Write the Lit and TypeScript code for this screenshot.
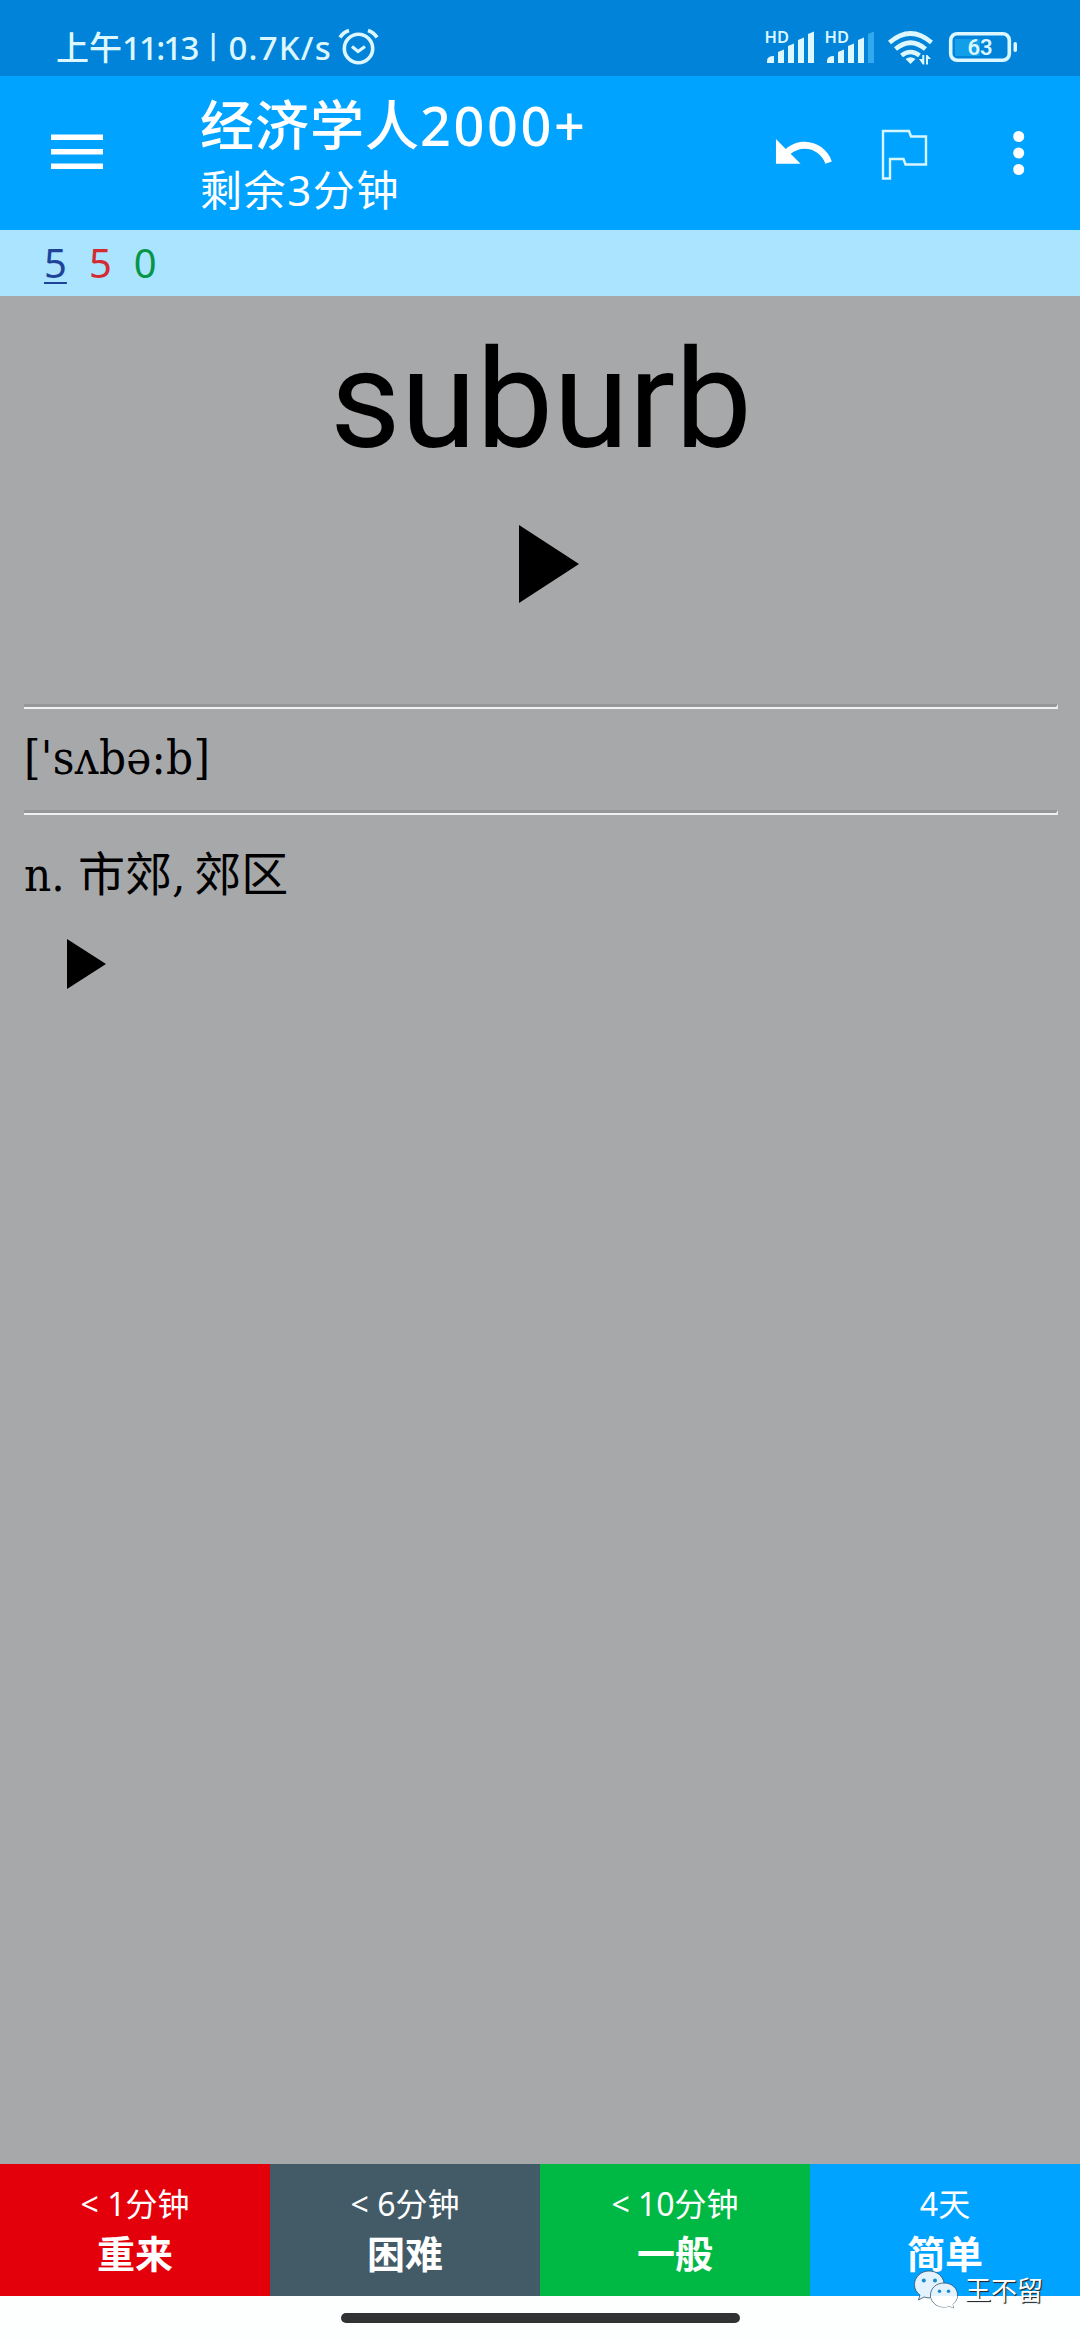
import { LitElement, html, css, svg } from "lit";
import { customElement } from "lit/decorators.js";

interface Answer {
  interval: string;
  label: string;
  tone: string;
}

const ANSWERS: Answer[] = [
  { interval: "< 1分钟", label: "重来", tone: "again" },
  { interval: "< 6分钟", label: "困难", tone: "hard" },
  { interval: "< 10分钟", label: "一般", tone: "good" },
  { interval: "4天", label: "简单", tone: "easy" },
];

@customElement("status-bar")
class StatusBar extends LitElement {
  static styles = css`
    :host {
      display: flex;
      align-items: flex-start;
      height: 76px;
      box-sizing: border-box;
      padding: 0 60px 0 56px;
      background: #0083d9;
      color: #dcf7ff;
    }
    .clock {
      display: flex;
      align-items: baseline;
      font: 500 33px/40px "Noto Sans", "Noto Sans CJK SC", sans-serif;
      padding-top: 28px;
      width: 282px;
      white-space: nowrap;
    }
    .time {
      letter-spacing: -1.8px;
    }
    .divider {
      width: 31px;
      text-align: center;
      font: 500 33px/36px "Roboto", sans-serif;
      align-self: flex-start;
    }
    .speed {
      letter-spacing: 1.2px;
    }
    .alarm {
      display: block;
      margin-top: 28px;
    }
    .spacer {
      flex: 1;
    }
    .signals {
      display: block;
      margin-top: 20px;
      overflow: visible;
    }
    .hd {
      font: 600 16px "Noto Sans", sans-serif;
      fill: #dcf7ff;
    }
    .level {
      font: 600 22px "Roboto", sans-serif;
      fill: #dcf7ff;
    }
  `;

  private bars(x: number, faded: boolean) {
    return svg`
      <path d="M${x} 35v-2q0-5 7-5v7z"/>
      <path d="M${x + 11} 35v-11l6-2.5v13.5z"/>
      <path d="M${x + 21} 35v-17l6-2.5v19.5z"/>
      <path d="M${x + 31} 35v-23l6-2.5v25.5z"/>
      <path d="M${x + 41} 35v-29l6-2.5v31.5z" fill=${faded ? "#31a9ee" : "#dcf7ff"}/>`;
  }

  render() {
    return html`
      <div class="clock">
        <span>上午</span><span class="time">11:13</span><span class="divider">|</span><span class="speed">0.7K/s</span>
      </div>
      <svg class="alarm" width="42" height="38" viewBox="0 0 42 38" fill="none" stroke="#dcf7ff" stroke-width="3.6">
        <circle cx="20.5" cy="20.5" r="14.2" />
        <path d="M2 9.500Q5 4.500 11 2.500M30 2.500Q36 4.500 39 9.500" />
        <path d="M14 18.500L20 23.500L27 18.500" stroke-width="3.200" />
      </svg>
      <div class="spacer"></div>
      <svg class="signals" width="256" height="48" viewBox="0 -8 256 48" fill="#dcf7ff">
        <text class="hd" x="0.5" y="15" textLength="24.5" lengthAdjust="spacingAndGlyphs">HD</text>
        ${this.bars(3, false)}
        <text class="hd" x="60.5" y="15" textLength="24.5" lengthAdjust="spacingAndGlyphs">HD</text>
        ${this.bars(63, true)}
        <g fill="none" stroke="#dcf7ff" stroke-width="4.600">
          <path d="M125.500 14.500Q146.500 -3.500 167.500 14.500" />
          <path d="M131.500 21Q146.500 8.500 161.500 21" />
          <path d="M137.500 27.500Q146.500 20.500 155.500 27.500" />
        </g>
        <path d="M146.500 36L141.500 31Q146.500 27.500 151.500 31Z" />
        <path d="M155 31h3.300v-4h2v9.500h-1.500zM162 27h1.300l3.700 4h-3v5.500h-2z" />
        <rect x="191" y="11" width="25" height="17" fill="#119fe9" />
        <rect x="186.700" y="5.700" width="58.600" height="26.600" rx="6.500" fill="none" stroke="#dcf7ff" stroke-width="3.600" />
        <rect x="249.500" y="14" width="3.500" height="10" rx="1.700" />
        <text class="level" x="203.500" y="27">63</text>
      </svg>
    `;
  }
}

@customElement("deck-toolbar")
class DeckToolbar extends LitElement {
  static styles = css`
    :host {
      display: flex;
      align-items: center;
      height: 154px;
      box-sizing: border-box;
      padding-left: 51px;
      background: #00a3ff;
      color: #fff;
      font-family: "Noto Sans", "Noto Sans CJK SC", sans-serif;
    }
    .menu {
      width: 149px;
      flex: none;
    }
    .menu svg,
    .actions svg {
      display: block;
    }
    .menu svg {
      margin-bottom: 3px;
    }
    .titles {
      flex: 1;
      height: 154px;
      white-space: nowrap;
    }
    .title {
      font-size: 54px;
      font-weight: 500;
      line-height: 64px;
      padding-top: 17px;
      letter-spacing: 1px;
    }
    .latin {
      letter-spacing: 2.6px;
    }
    .subtitle {
      font-size: 42px;
      line-height: 56px;
      padding-top: 5px;
      letter-spacing: 1.6px;
    }
    .actions {
      flex: none;
    }
  `;

  render() {
    return html`
      <div class="menu">
        <svg width="52" height="36" viewBox="0 0 52 36" fill="#fff">
          <rect y="0.500" width="52" height="5.500" />
          <rect y="15" width="52" height="5.500" />
          <rect y="29.500" width="52" height="5.500" />
        </svg>
      </div>
      <div class="titles">
        <div class="title">经济学人<span class="latin">2000+</span></div>
        <div class="subtitle">剩余3分钟</div>
      </div>
      <div class="actions">
        <svg width="310" height="154" viewBox="770 76 310 154">
          <path
            transform="translate(770.500 120) scale(2.730)"
            fill="#fff"
            d="M12.500 8c-2.650 0-5.050.990-6.900 2.600L2 7v9h9l-3.620-3.620c1.390-1.160 3.160-1.880 5.120-1.880 3.540 0 6.550 2.310 7.600 5.500l2.370-.780C21.080 11.030 17.150 8 12.500 8z"
          />
          <path
            d="M883 131H909L911 136.500H926V164.500H905.500L903.500 159H890V178.500H883Z"
            fill="none"
            stroke="#d8f6ff"
            stroke-width="2.400"
          />
          <g fill="#fff">
            <circle cx="1018.700" cy="136.500" r="5.500" />
            <circle cx="1018.700" cy="153" r="5.500" />
            <circle cx="1018.700" cy="169.500" r="5.500" />
          </g>
        </svg>
      </div>
    `;
  }
}

@customElement("card-content")
class CardContent extends LitElement {
  static styles = css`
    :host {
      display: flex;
      flex-direction: column;
      flex: 1;
      padding: 0 22px 0 24px;
      background: #a7a8aa;
      color: #000;
    }
    .word {
      height: 229px;
      box-sizing: border-box;
      padding-top: 24px;
      text-align: center;
      font: 137px/160px "Roboto", sans-serif;
    }
    .play {
      display: block;
      align-self: center;
      margin-left: 15px;
    }
    .rule {
      height: 5px;
      box-sizing: border-box;
      border: solid;
      border-width: 3px 2px 2px 0;
      border-color: #969799 #e8e9ea #f0f1f2 #969799;
    }
    .first {
      margin-top: 101px;
    }
    .phonetic {
      height: 101px;
      font: 47px/97px "DejaVu Serif Condensed", "DejaVu Serif", serif;
      letter-spacing: 0.3px;
      white-space: nowrap;
    }
    .meaning {
      height: 80px;
      margin-top: 20px;
      font: 47px/80px "DejaVu Serif Condensed", "DejaVu Serif", "Noto Sans CJK SC", serif;
      white-space: nowrap;
    }
    .comma {
      letter-spacing: -2.3px;
    }
    .play-small {
      display: block;
      margin: 24px 0 0 43px;
    }
  `;

  render() {
    return html`
      <div class="word">suburb</div>
      <svg class="play" width="60" height="78" viewBox="0 0 60 78"><path d="M0 0L60 39L0 78Z" /></svg>
      <div class="rule first"></div>
      <div class="phonetic">['sʌbə:b]</div>
      <div class="rule"></div>
      <div class="meaning">n. 市郊<span class="comma">, </span>郊区</div>
      <svg class="play-small" width="39" height="50" viewBox="0 0 39 50"><path d="M0 0L39 25L0 50Z" /></svg>
    `;
  }
}

@customElement("app-root")
class AppRoot extends LitElement {
  static styles = css`
    :host {
      display: flex;
      flex-direction: column;
      position: relative;
      width: 1080px;
      height: 2340px;
      overflow: hidden;
      font-family: "Noto Sans", "Noto Sans CJK SC", sans-serif;
      background: #fdfffe;
    }
    .counts {
      display: flex;
      gap: 22px;
      height: 66px;
      box-sizing: border-box;
      padding: 0 44px;
      background: #aae4ff;
      font-size: 40px;
      line-height: 66px;
    }
    .new {
      color: #20439a;
      text-decoration: underline;
      text-decoration-thickness: 2px;
      text-underline-offset: 4px;
    }
    .learning {
      color: #d42b32;
    }
    .review {
      color: #079548;
    }
    .answers {
      display: grid;
      grid-template-columns: repeat(4, 270px);
      height: 132px;
      color: #fff;
      text-align: center;
      white-space: nowrap;
    }
    .interval {
      font-size: 32px;
      line-height: 40px;
      padding-top: 20px;
    }
    .label {
      font-size: 38px;
      font-weight: 700;
      line-height: 50px;
      padding-top: 4px;
    }
    .again {
      background: #e4000b;
    }
    .hard {
      background: #425b67;
    }
    .good {
      background: #00b944;
    }
    .easy {
      background: #00a3ff;
    }
    .nav {
      display: flex;
      justify-content: center;
      height: 44px;
      padding-top: 17px;
      box-sizing: border-box;
    }
    .pill {
      width: 399px;
      height: 10px;
      border-radius: 5px;
      background: #303234;
    }
    .watermark {
      position: absolute;
      left: 913px;
      top: 2269px;
      display: flex;
      align-items: center;
      gap: 6px;
      color: #fff;
      font-size: 26px;
      line-height: 40px;
      text-shadow: 1px 1px 1px #222b33, 1px 1px 0 #444d55;
    }
  `;

  render() {
    return html`
      <status-bar></status-bar>
      <deck-toolbar></deck-toolbar>
      <div class="counts">
        <span class="new">5</span><span class="learning">5</span><span class="review">0</span>
      </div>
      <card-content></card-content>
      <div class="answers">
        ${ANSWERS.map(
          (a) => html`<div class=${a.tone}>
            <div class="interval">${a.interval}</div>
            <div class="label">${a.label}</div>
          </div>`,
        )}
      </div>
      <div class="nav"><div class="pill"></div></div>
      <div class="watermark">
        <svg width="46" height="42" viewBox="0 0 46 42">
          <g fill="#e2f3ff" stroke="#34506a" stroke-width="0.800">
            <path d="M16 2C8 2 1.500 8 1.500 15.500C1.500 20 3.500 23.500 7 26L5.500 31L11 28C13 28.700 15 29 17 28.800L31 14C30 7 24 2 16 2Z" />
            <path d="M31 14C23.500 14 17.500 19 17.500 26S23.500 38 31 38C33 38 35 37.600 36.500 37L40.500 39L39.500 35.500C42.500 33.300 44.500 30 44.500 26C44.500 19 38.500 14 31 14Z" />
            <path d="M18 27H44.300C43.800 31 41.500 34 39.500 35.500L40.500 39L36.500 37C35 37.600 33 38 31 38C24 38 18.500 33 18 27Z" fill="#fff" stroke="none" />
          </g>
          <g fill="#1789cc">
            <circle cx="10.800" cy="11.500" r="2" /><circle cx="22" cy="11.500" r="2" />
            <circle cx="26.500" cy="22.300" r="1.700" /><circle cx="35.500" cy="22.300" r="1.700" />
          </g>
        </svg>
        <span>王不留</span>
      </div>
    `;
  }
}
